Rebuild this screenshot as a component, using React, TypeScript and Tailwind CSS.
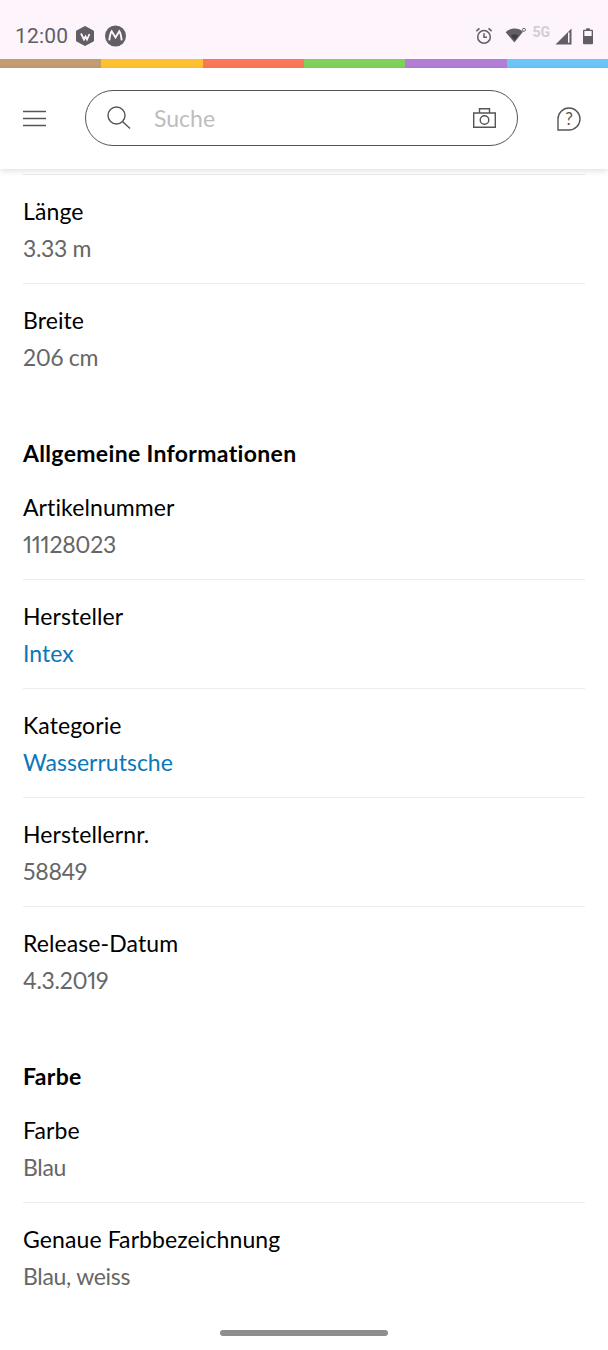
const strip = ["bg-[#c49c72]", "bg-[#fdc22e]", "bg-[#f87858]", "bg-[#80d05c]", "bg-[#b27ed6]", "bg-[#6cc4f8]"];

function SpecRow({ label, value, link, first }: { label: string; value: string; link?: boolean; first?: boolean }) {
  return (
    <div className={first ? "pt-[17px] pb-[16px] border-t border-transparent" : "pt-[18px] pb-[16px] border-t border-[#ececec]"}>
      <div className="text-[23px] leading-[36px] tracking-[0.1px] text-black">{label}</div>
      <div
        className={
          link
            ? "text-[23px] leading-[38px] tracking-[0.01px] text-[#0a78b8]"
            : "text-[23px] leading-[38px] tracking-[-0.3px] proportional-nums text-[#666666]"
        }
      >
        {value}
      </div>
    </div>
  );
}

function StatusBar() {
  return (
    <div className="h-[59px] bg-[#fdf4fc] flex items-center justify-between pl-[15px] pr-[15px] pt-[13px]">
      <div className="flex items-center">
        <span className="text-[21px] leading-[24px] tracking-[0.2px] text-[#625e66] font-['Roboto',sans-serif]">12:00</span>
        <svg className="ml-[8px]" width="18" height="20" viewBox="0 0 18 20">
          <path d="M9 0.5 L17.5 5 V15 L9 19.5 L0.5 15 V5 Z" fill="#625e66" stroke="#625e66" strokeLinejoin="round" />
          <path d="M5 7.5 L8 13.5 L9.5 10.5 L11 13.5 L13.5 8" fill="none" stroke="#fdf4fc" strokeWidth="1.8" />
        </svg>
        <svg className="ml-[11px]" width="21" height="22" viewBox="0 0 22 22">
          <circle cx="11" cy="11" r="11" fill="#625e66" />
          <path d="M4.5 15.5 C5 11 6 7.5 7 6 L11 12.5 L15 6 C16 7.5 17 11 17.5 15.5" fill="none" stroke="#fdf4fc" strokeWidth="2" />
        </svg>
      </div>
      <div className="flex items-center">
        <svg width="18" height="18" viewBox="0 0 20 20" fill="none" stroke="#625e66" strokeWidth="1.7">
          <circle cx="10" cy="11" r="7" />
          <path d="M10 7 V11.3 H13.3 M1.5 4.5 L5 1.5 M18.5 4.5 L15 1.5" />
        </svg>
        <svg className="ml-[12px] mb-[2px]" width="21" height="16" viewBox="0 0 22 17">
          <path d="M0.5 5.5 C6 0.5 14 0.5 19 5 L9.8 16.5 Z" fill="#625e66" />
          <path d="M6 9 C8.5 7.4 11.5 7.4 14 9 L10 14 Z" fill="#3f3c42" />
          <circle cx="20" cy="3" r="1.6" fill="none" stroke="#625e66" strokeWidth="1" />
        </svg>
        <span className="ml-[6px] mb-[8px] text-[14px] leading-[14px] font-bold text-[#d3ced6] font-['Roboto',sans-serif]">5G</span>
        <svg className="ml-[5px]" width="17" height="17" viewBox="0 0 17 17">
          <path d="M16.5 0.5 V16.5 H0.5 Z" fill="#625e66" />
          <path d="M13 4.5 H14.5 V14.8 H13 Z" fill="#fdf4fc" />
        </svg>
        <svg className="ml-[11px] mb-[1px]" width="10" height="18" viewBox="0 0 11 18">
          <path d="M3.5 0.5 H7.5 V2 H10 A1 1 0 0 1 11 3 V17 A1 1 0 0 1 10 18 H1 A1 1 0 0 1 0 17 V3 A1 1 0 0 1 1 2 H3.5 Z" fill="#625e66" />
          <rect x="1.5" y="3.5" width="8" height="5.5" fill="#fdf4fc" />
        </svg>
      </div>
    </div>
  );
}

function TopBar() {
  return (
    <div className="relative z-10 h-[101px] bg-white flex items-center px-[23px] shadow-[0_2px_6px_rgba(0,0,0,0.12)]">
      <svg width="23" height="17" viewBox="0 0 23 17" stroke="#555555" strokeWidth="1.4">
        <path d="M0 1.5 H23 M0 8.5 H23 M0 15.5 H23" />
      </svg>
      <div className="ml-[39px] mb-[1px] w-[433px] h-[56px] rounded-full border border-[#555555] flex items-center pl-[21px] pr-[21px]">
        <svg width="24" height="24" viewBox="0 0 24 24" fill="none" stroke="#555555" strokeWidth="1.4">
          <circle cx="9.5" cy="9.5" r="8.5" />
          <path d="M15.5 15.5 L23 22.5" />
        </svg>
        <span className="ml-[23px] text-[23px] leading-[30px] text-[#bdbdbd]">Suche</span>
        <svg className="ml-auto" width="23" height="20" viewBox="0 0 23 20" fill="none" stroke="#555555" strokeWidth="1.4">
          <path d="M0.7 5 H22.3 V19.3 H0.7 Z M6.5 5 V0.7 H16.5 V5" />
          <circle cx="11.5" cy="12" r="4.3" />
        </svg>
      </div>
      <svg className="ml-[39px]" width="24" height="24" viewBox="0 0 24 24" fill="none" stroke="#555555" strokeWidth="1.4">
        <path d="M1 23 V12 A11 11 0 1 1 12 23 Z" />
        <text x="12" y="18" textAnchor="middle" fontSize="17" fill="#555555" stroke="none" fontFamily="Lato, sans-serif">?</text>
      </svg>
    </div>
  );
}

export default function App() {
  return (
    <div className="relative h-[1350px] w-[608px] overflow-hidden bg-white font-['Lato',sans-serif]">
      <StatusBar />
      <div className="flex h-[9px]">
        {strip.map((c) => (
          <div key={c} className={`flex-1 ${c}`} />
        ))}
      </div>
      <TopBar />

      <div className="mx-[23px] mt-[5px] w-[562px]">
        <SpecRow label="Länge" value="3.33 m" />
        <SpecRow label="Breite" value="206 cm" />

        <h2 className="mt-[43px] text-[23px] leading-[36px] tracking-[0.33px] font-bold text-black">Allgemeine Informationen</h2>
        <SpecRow first label="Artikelnummer" value="11128023" />
        <SpecRow label="Hersteller" value="Intex" link />
        <SpecRow label="Kategorie" value="Wasserrutsche" link />
        <SpecRow label="Herstellernr." value="58849" />
        <SpecRow label="Release-Datum" value="4.3.2019" />

        <h2 className="mt-[43px] text-[23px] leading-[36px] tracking-[0.33px] font-bold text-black">Farbe</h2>
        <SpecRow first label="Farbe" value="Blau" />
        <SpecRow label="Genaue Farbbezeichnung" value="Blau, weiss" />
      </div>

      <div className="absolute bottom-[14px] left-[220px] h-[6px] w-[168px] rounded-full bg-[#8e8e8e]" />
    </div>
  );
}
